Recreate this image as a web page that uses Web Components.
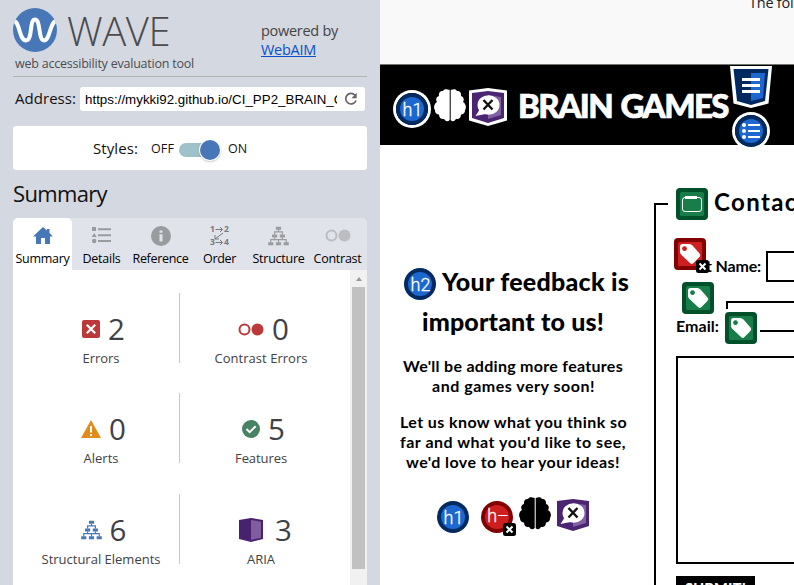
<!DOCTYPE html>
<html lang="en"><head><meta charset="utf-8"><title>WAVE report</title>
<style>html,body{margin:0;height:585px;overflow:hidden;background:#fff}</style></head>
<body><wave-app></wave-app>
<script>
const tree='<path d="M12 1h8v5h-8zM6 13h8v5H6zM18 13h8v5h-8zM0 25h8v5H0zM12 25h8v5h-8zM24 25h8v5h-8z"/><path d="M16 6v4M10 13v-4h12v4M10 18v3M22 18v3M4 25v-4h24v4M16 21v4" fill="none" stroke="currentColor" stroke-width="1.8"/>';
const tag=(a,b)=>`<rect width="32" height="32" rx="4" fill="${a}"/><rect x="4" y="4" width="24" height="24" rx="1.5" fill="${b}"/><path fill="#fff" fill-rule="evenodd" d="M6 8.500Q6 6 8.500 6H15.500Q17 6 18.500 7.500L25.500 15.500Q27 17.300 25.400 19L19.500 25Q17.800 26.800 16 25L7.500 17Q6 15.500 6 14zM10.500 8.200a2.400 2.400 0 1 0 .01 0z"/>`;
const badge='<rect x="22" y="22" width="13" height="13" rx="2.500" fill="#000"/><path d="m25.500 25.500 6 6m0-6-6 6" stroke="#fff" stroke-width="2"/>';
const circ=(t,a,b)=>`<circle cx="16" cy="16" r="16" fill="${a}"/><circle cx="16" cy="16" r="12" fill="${b}"/>`+(t?`<text x="${t=='h–'?17:16.5}" y="${t=='h–'?21:22.6}" text-anchor="middle" font-family="Roboto" font-weight="300" font-size="18" fill="#fff" stroke="#fff" stroke-width=".3">${t}</text>`:'');
const brain='<path d="M15.700 1C12-.5 10 0 9 2 6 1.500 4.500 4 5 7 2 8 1.500 11 3 13 -.2 15-.6 19 1 21 .8 24 3 25.500 5 25.500c0 4 3 5 5 4.300 1 2.800 4 3.200 5.700 1.200zM16.700 1C20-.5 22 0 23 2c3-.5 4.500 2 4 5 3 1 3.500 4 2 6 3.200 2 3.600 6 2 8 .2 3-2 4.500-4 4.500 0 4-3 5-5 4.300-1 2.800-4 3.200-5.300 1.200z"/>';
const chat='<path d="M0 2 16 0l16 2v25l-16 5-16-5z" fill="#4b2472"/><path d="M16 4l13 2v18l-13 4z" fill="#8060a0"/><ellipse cx="16.500" cy="14" rx="11" ry="9.800" fill="#fff"/><path d="M8 18 3.500 25l10-2z" fill="#fff"/><path d="m11.500 9 9 9.500m0-9.500-9 9.500" stroke="#111" stroke-width="2.400"/>';
const ICONS={
 logo:['44 44','<defs><clipPath id="c"><circle cx="22" cy="22" r="22"/></clipPath></defs><circle cx="22" cy="22" r="22" fill="#4877b7"/><path clip-path="url(#c)" d="M1 13C7 14 6 32.500 13 32.500S16 11.500 22 11.500 25 32.500 31 32.500 37 14 43 13" fill="none" stroke="#fff" stroke-width="4"/>'],
 reload:['14 14','<path d="M11 3.200A5.300 5.300 0 1 0 12 8.500" fill="none" stroke="#666" stroke-width="1.700"/><path d="M12.700.8v5.400H7.400z" fill="#666"/>'],
 home:['20 18','<path d="m10 0 4 3.500V2h2.500v4L20 9.500h-3V17h-5v-6H8v6H3V9.500H0z"/>'],
 details:['19 17','<path d="M0 0h4v4H0zM2.200 6 4.700 10h-5zM6 1.200h13v2H6zM6 7.200h13v2H6zM6 13h13v2H6z"/><circle cx="2.200" cy="14" r="2.200"/>'],
 info:['20 20','<circle cx="10" cy="10" r="10"/><path d="M8.500 4.500h3v2.300h-3zM8.500 8.300h3v7.200h-3z" fill="#e0e3e9"/>'],
 order:['20 20','<g font-family="Open Sans" font-weight="700" font-size="8.500"><text x="0" y="6.300">1</text><text x="14" y="6.300">2</text><text x="0" y="19.300">3</text><text x="14" y="19.300">4</text></g><path d="M5.500 3.500h7m-2.500-2.500 2.500 2.500L10 6M5.500 16.500h7M10 14l2.500 2.500L10 19M13 7 5 13m0-4v4h4" fill="none" stroke="currentColor" stroke-width="1"/>'],
 tree:['32 31',tree],
 contrast:['26 13','<circle cx="6.500" cy="6.500" r="5" fill="none" stroke="currentColor" stroke-width="2"/><circle cx="19.500" cy="6.500" r="6"/>'],
 error:['18 18','<rect width="18" height="18" rx="2"/><path d="m4.800 4.800 8.400 8.400m0-8.400-8.400 8.400" stroke="#fff" stroke-width="2.200"/>'],
 alert:['20 18','<path d="m10 0 10 18H0z"/><path d="M9 6h2v6.500H9zM9 14h2v2H9z" fill="#fff"/>'],
 check:['18 18','<circle cx="9" cy="9" r="9"/><path d="m4.500 9 3.200 3.200 6-6" fill="none" stroke="#fff" stroke-width="2"/>'],
 aria:['24 24','<path d="M0 2 12 0l12 2v19l-12 3-12-3z" fill="#48226e"/><path d="m12 2 10 1.700v16L12 22z" fill="#805d9e"/>'],
 h1:['32 32',circ('h1','#002a60','#1d68d0')],h2:['32 32',circ('h2','#002a60','#1d68d0')],hx:['32 32',circ('h–','#820000','#cd1f1f')+badge],
 list:['32 32',circ('','#002a60','#1d68d0')+'<g fill="#fff"><circle cx="9" cy="10" r="2"/><circle cx="9" cy="16" r="2"/><circle cx="9" cy="22" r="2"/><path d="M13 9h12v2H13zM13 15h12v2H13zM13 21h12v2H13z"/></g>'],
 nav:['42 42','<path d="M0 0h42l-3.500 37.500L21 42 3.500 37.500z" fill="#fff"/><path d="M3.500 3h35L35 35l-14 4-14-4z" fill="#00295f"/><path d="M21 7h14l-2 25-12 3z" fill="#1d68d0"/><path d="M12 12h18v3H12zM12 18h18v3H12zM12 24h18v3H12z" fill="#fff"/>'],
 brain:['32 32',brain],chat:['32 32',chat],
 chatw:['38 38','<path d="M0 2.500 19 0l19 2.500v30L19 38 0 32.500z" fill="#fff"/><g transform="translate(3 3)">'+chat+'</g>'],
 label:['32 32',tag('#00502a','#187d49')],labelx:['32 32',tag('#820000','#cd1f1f')+badge],
 field:['32 32','<rect width="32" height="32" rx="4" fill="#00502a"/><rect x="4" y="4" width="24" height="24" rx="1.500" fill="#187d49"/><rect x="6.500" y="9.500" width="19" height="14" rx="2.500" fill="none" stroke="#fff"/><path d="M9 8h12v3H9z" fill="#fff"/>']
};
function make(name,css,html,setup){customElements.define(name,class extends HTMLElement{constructor(){super();this.attachShadow({mode:'open'}).innerHTML=`<style>*{box-sizing:border-box}${css}</style>${html}`}connectedCallback(){if(setup)setup(this,this.shadowRoot)}})}
make('x-icon',':host{display:block;flex:none}svg{display:block;width:100%;height:100%;overflow:visible;fill:currentColor}','<svg></svg>',(e,r)=>{const i=ICONS[e.getAttribute('name')],s=r.querySelector('svg');s.setAttribute('viewBox','0 0 '+i[0]);s.innerHTML=i[1];const [w,h]=i[0].split(' ');e.style.width=(e.getAttribute('w')||w)+'px';e.style.height=(e.getAttribute('h')||h)+'px'});
/* Spreads its letters so that one line spans the width given in "w". */
make('fit-text',':host{display:block;white-space:nowrap}','<span><slot></slot></span>',(e,r)=>{const w=+e.getAttribute('w'),s=r.querySelector('span');e.style.width=w+'px';s.style.letterSpacing=(w-s.getBoundingClientRect().width)/e.textContent.length+'px'});
customElements.define('report-tab',class extends HTMLElement{constructor(){super();this.attachShadow({mode:'open'})}connectedCallback(){const a=n=>this.getAttribute(n);this.shadowRoot.innerHTML=`<style>:host{display:flex;flex-direction:column;align-items:center;width:59px;height:52px;color:${a('color')||'#999b9f'};flex:none}:host([active]){background:#fff;border-radius:5px 5px 0 0}.i{height:35px;display:flex;align-items:center}fit-text{font-size:12.500px;line-height:11px;color:#000}</style><div class="i"><x-icon name="${a('icon')}" ${a('iw')||''}></x-icon></div><fit-text w="${a('w')}">${a('label')}</fit-text>`}});
customElements.define('report-stat',class extends HTMLElement{constructor(){super();this.attachShadow({mode:'open'})}connectedCallback(){const a=n=>this.getAttribute(n);this.shadowRoot.innerHTML=`<style>:host{display:flex;flex-direction:column;align-items:center;height:100px;position:relative;color:#3f4145}:host([line])::after{content:"";position:absolute;right:1px;top:0;width:1px;height:70px;background:#c9c9c9}.r{display:flex;align-items:center;gap:${a('gap')||8}px;height:36px;margin-top:18px;margin-left:${a('shift')||5}px;font:29.500px/36px "Open Sans",sans-serif}x-icon{color:${a('color')}}fit-text{font-size:13px;line-height:20px;margin-top:1px}</style><div class="r"><x-icon name="${a('icon')}" ${a('iw')||''}></x-icon><span>${a('n')}</span></div><fit-text w="${a('w')}">${a('label')}</fit-text>`}});
make('report-panel',`:host{display:flex;flex-direction:column;width:380px;height:585px;background:#d4d8e0;padding:0 13px;box-sizing:border-box;font-family:"Open Sans",sans-serif;color:#111}
header{height:77px;border-bottom:1px solid #aeb4b4;display:flex;flex:none}
.brand{width:248px}.top{display:flex;height:55px;padding-top:8px;gap:10px}.top fit-text{font-size:40px;font-weight:300;line-height:46px;color:#4b4b4d}.brand>fit-text{font-size:12.500px;line-height:17px;margin-left:2px;color:#4c4d50}
.by{padding-top:21px;font-size:14.500px;line-height:19px;color:#444}.by a{color:#0b50c8;text-decoration:underline;display:block}
.addr{display:flex;height:24px;margin-top:10px;flex:none;padding-left:2px;font-size:15px;line-height:23px}
.url{margin-left:4px;width:285px;border-radius:3px;background:#fff;display:flex;padding:0 0 0 5px;font:13.330px/25px "Liberation Sans",sans-serif;color:#000}.clip{width:252px;overflow:hidden;height:24px}.url x-icon{margin:5px 0 0 7px}
.styles{height:44px;margin-top:15px;background:#fff;border-radius:3px;flex:none;display:flex;padding-left:80px;font-size:12.500px;line-height:45px}.sw{width:40px;height:14px;margin:17px 0 0 5px;border-radius:7px;background:#9fc1ca;position:relative}.sw::after{content:"";position:absolute;left:21px;top:-3px;width:20px;height:20px;border-radius:50%;background:#4877b7;box-shadow:0 0 0 1px #fff,0 1px 3px #777}
h1{font-size:22px;font-weight:400;line-height:28px;height:30px;margin:9px 0;flex:none}
.tabs{display:flex;background:#e0e3e9;border-radius:5px 5px 0 0;height:52px;flex:none}
.body{display:flex;background:#fff;flex:1;min-height:0}.grid{display:grid;grid-template-columns:160px 160px;grid-template-rows:100px 101px 100px;width:337px;padding:23px 9px 0 8px;overflow:hidden}
.bar{width:17px;background:#f1f1f1;padding:7px 2px 0}.bar i{display:block;margin:0 auto 6px;width:0;border:3.500px solid transparent;border-top:0;border-bottom:4px solid #999}.bar b{display:block;width:13px;height:282px;background:#c1c1c1}`,
`<header><div class="brand"><div class="top"><x-icon name="logo"></x-icon><fit-text w="103">WAVE</fit-text></div><fit-text w="179">web accessibility evaluation tool</fit-text></div><div class="by"><fit-text w="77">powered by</fit-text><a><fit-text w="55">WebAIM</fit-text></a></div></header>
<div class="addr"><fit-text w="61">Address:</fit-text><div class="url"><div class="clip"><fit-text w="268">https://mykki92.github.io/CI_PP2_BRAIN_GA</fit-text></div><x-icon name="reload"></x-icon></div></div>
<div class="styles"><fit-text w="45" style="font-size:15px">Styles:</fit-text><fit-text w="23" style="margin-left:13px">OFF</fit-text><span class="sw"></span><fit-text w="19" style="margin-left:9px">ON</fit-text></div>
<h1><fit-text w="94">Summary</fit-text></h1>
<div class="tabs"><report-tab active color="#4877b7" icon="home" label="Summary" w="54"></report-tab><report-tab icon="details" label="Details" w="38"></report-tab><report-tab icon="info" label="Reference" w="56"></report-tab><report-tab color="#77797d" icon="order" label="Order" w="33"></report-tab><report-tab icon="tree" iw='w="21" h="20"' label="Structure" w="52"></report-tab><report-tab color="#bbbdc2" icon="contrast" label="Contrast" w="48"></report-tab></div>
<div class="body"><div class="grid"><report-stat line icon="error" color="#bb3939" n="2" label="Errors" w="37"></report-stat><report-stat icon="contrast" color="#bb3939" n="0" label="Contrast Errors" w="93"></report-stat><report-stat line icon="alert" color="#e38c19" n="0" label="Alerts" w="35"></report-stat><report-stat icon="check" color="#478363" n="5" label="Features" w="52"></report-stat><report-stat line icon="tree" iw='w="21" h="20"' color="#4877b7" n="6" label="Structural Elements" w="119"></report-stat><report-stat icon="aria" gap="12" shift="9" n="3" label="ARIA" w="28"></report-stat></div><div class="bar"><i></i><b></b></div></div>`);
make('site-header',`:host{display:block}.notice{height:64px;background:#f9f9f9;border-bottom:1px solid #70756e;box-sizing:content-box;padding-left:369px;overflow:hidden;font:14.500px/18px "Open Sans",sans-serif;color:#222}.notice fit-text{margin-top:-6px}
.bar{height:80px;background:#000;color:#fff;display:flex;position:relative}.h{margin:28px 0 0 16px;box-shadow:0 0 0 3px #fff;border-radius:50%}.brain{margin:24px 0 0 6px}.chat{margin:23px 0 0 3px}.bar fit-text{margin:20px 0 0 11px;font:900 33px/40px Lato,sans-serif;-webkit-text-stroke:.7px #fff;word-spacing:2px}.nav{position:absolute;left:350px;top:1px}.list{position:absolute;left:355px;top:50px;border-radius:50%;box-shadow:0 0 0 3px #fff}`,
`<div class="notice"><fit-text w="87">The following</fit-text></div><div class="bar"><x-icon class="h" name="h1"></x-icon><x-icon class="brain" name="brain"></x-icon><x-icon class="chat" name="chatw"></x-icon><fit-text w="210">BRAIN GAMES</fit-text><x-icon class="nav" name="nav"></x-icon><x-icon class="list" name="list"></x-icon></div>`);
make('feedback-note',`:host{display:block;width:274px;flex:none;padding:116px 4px 0 0;box-sizing:border-box}h2{margin:0;font-size:25px;line-height:40px;font-weight:900}.first{display:flex;padding-left:24px;gap:6px;height:40px}.first x-icon{margin-top:7px}p{font-size:16px;line-height:20px;font-weight:700;margin:16px 0}p:first-of-type{margin-top:15px}.icons{display:flex;padding-left:57px;height:34px;margin-top:25px;gap:12px}.icons x-icon{margin-top:4px}`,
`<h2><div class="first"><x-icon name="h2"></x-icon><fit-text w="187">Your feedback is</fit-text></div><fit-text w="182" style="margin-left:42px">important to us!</fit-text></h2>
<p><fit-text w="220" style="margin-left:23px">We'll be adding more features</fit-text><fit-text w="163" style="margin-left:52px">and games very soon!</fit-text></p><p><fit-text w="227" style="margin-left:20px">Let us know what you think so</fit-text><fit-text w="226" style="margin-left:20px">far and what you'd like to see,</fit-text><fit-text w="214" style="margin-left:26px">we'd love to hear your ideas!</fit-text></p>
<div class="icons"><x-icon name="h1"></x-icon><x-icon name="hx"></x-icon><x-icon name="brain" style="margin:0 0 0 -6px"></x-icon><x-icon name="chat" style="margin:2px 0 0 -6px"></x-icon></div>`);
make('contact-form',`:host{display:block;flex:1;height:440px;position:relative;font-weight:700;font-size:16px;line-height:20px}
fieldset{border:2px solid #000;border-right:0;margin:58px 0 0;height:460px;padding:0 0 0 20px;min-width:0;position:relative}
.legend{position:relative;margin-top:-17px;margin-left:-8px;padding-left:8px;width:150px;background:#fff;display:flex;gap:6px;height:34px}.legend fit-text{font-size:24px;line-height:28px}
.row{display:flex;height:31px;margin-top:29px}.name{padding:5px 0 0 30px}.box{border:2px solid #000;border-right:0}.r2{height:31px;margin-top:19px}.email{padding-top:15px}.area{height:208px;margin-top:24px}
button{display:block;margin:12px 0 0;width:79px;height:26px;border:0;padding:0 0 1px 9px;background:#000;color:#fff;font:900 14.500px/18px Lato,sans-serif;text-align:left}
.o{position:absolute}`,
`<fieldset><div class="legend"><x-icon name="field"></x-icon><fit-text w="94">Contact</fit-text></div>
<div class="row"><div class="name"><fit-text w="55">t Name:</fit-text></div><div class="box" style="margin-left:5px;flex:1"></div></div>
<div class="row r2"><div class="email"><fit-text w="43">Email:</fit-text></div><div class="box" style="margin-left:7px;flex:1"></div></div>
<div class="box area"></div><button><fit-text w="61">SUBMIT!</fit-text></button></fieldset>
<x-icon class="o" style="left:20px;top:93px" name="labelx"></x-icon><x-icon class="o" style="left:28px;top:137px" name="label"></x-icon><span class="o" style="left:71px;top:164px;width:35px;height:38px;background:#fff"></span><x-icon class="o" style="left:71px;top:167px" name="label"></x-icon>`);
make('wave-app',':host{display:flex;width:794px;height:585px;overflow:hidden}main{width:414px;height:585px;overflow:hidden;background:#fff;color:#000;font-family:Lato,sans-serif}.cols{display:flex}','<report-panel></report-panel><main><site-header></site-header><div class="cols"><feedback-note></feedback-note><contact-form></contact-form></div></main>');
</script></body></html>
